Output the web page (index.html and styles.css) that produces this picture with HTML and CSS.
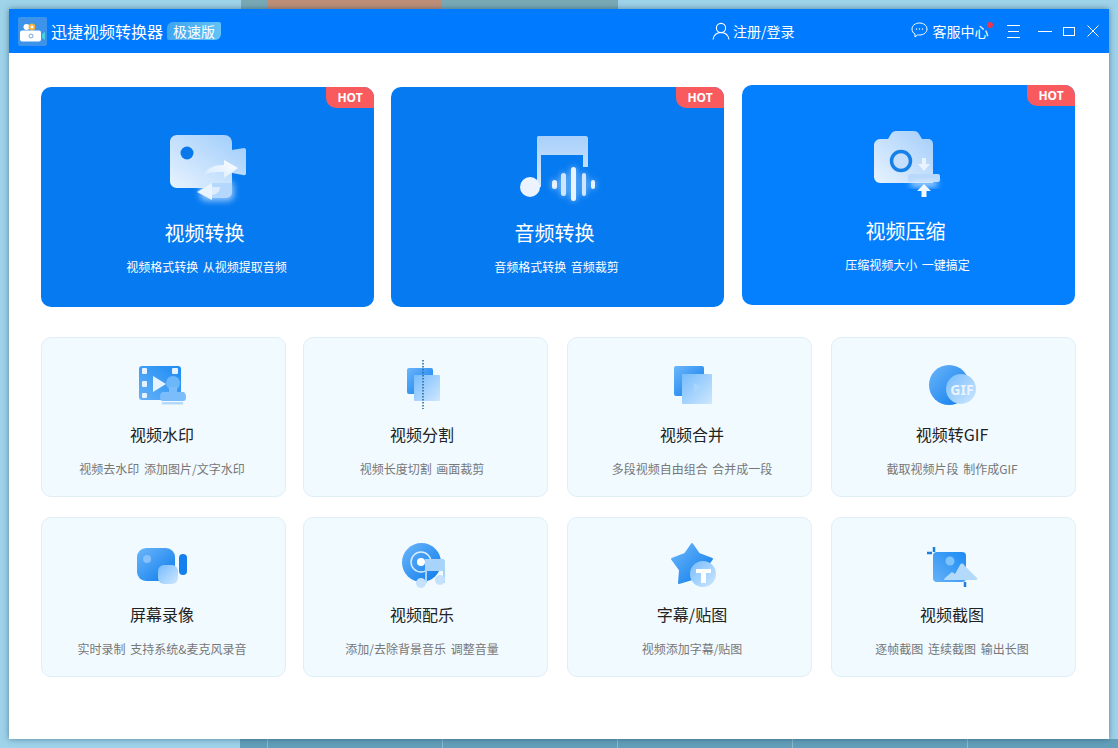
FILE: index.html
```html
<!DOCTYPE html>
<html lang="zh-CN">
<head>
	<meta charset="UTF-8">
	<title>迅捷视频转换器</title>
	<link rel="stylesheet" href="styles.css">
</head>
<body>
	<div class="desktop-top"></div>
	<div class="desktop-bottom"></div>
	<div class="window">
		<header class="titlebar">
			<svg class="logo" width="29" height="29" viewBox="0 0 29 29">
				<rect width="29" height="29" rx="2" fill="#3d92ea"/>
				<circle cx="8.500" cy="10" r="3" fill="#fff"/>
				<circle cx="14" cy="10" r="3.400" fill="#f3b23c"/>
				<circle cx="14" cy="10" r="1.400" fill="#fff"/>
				<rect x="2" y="13.500" width="21" height="11" rx="2" fill="#fff"/>
				<circle cx="13" cy="19" r="2" fill="none" stroke="#7aa8d8" stroke-width="1"/>
				<path d="M24 17l3-2v8l-3-2z" fill="#46d0e6"/>
			</svg>
			<span class="app-name">迅捷视频转换器</span>
			<span class="edition">极速版</span>
			<div class="login">
				<svg width="18" height="18" viewBox="0 0 18 18" fill="none" stroke="#fff" stroke-width="1.100">
					<circle cx="9" cy="6" r="4.600"/>
					<path d="M1 17.500c.8-4.500 3.600-7 8-7s7.200 2.500 8 7"/>
				</svg>
				<span>注册/登录</span>
			</div>
			<div class="service">
				<svg width="17" height="16" viewBox="0 0 17 16" fill="none" stroke="#fff" stroke-width="1">
					<path d="M8.500 1c4.300 0 7.500 2.600 7.500 6s-3.200 6-7.500 6c-.6 0-1.200 0-1.800-.2L4 15v-3C2 11 1 9.200 1 7c0-3.400 3.200-6 7.500-6z"/>
					<circle cx="5.500" cy="7" r=".7" fill="#fff" stroke="none"/>
					<circle cx="8.500" cy="7" r=".7" fill="#fff" stroke="none"/>
					<circle cx="11.500" cy="7" r=".7" fill="#fff" stroke="none"/>
				</svg>
				<span class="service-text">客服中心<i class="dot"></i></span>
			</div>
			<div class="win-btns">
				<svg class="menu" width="13" height="13" viewBox="0 0 13 13" stroke="#fff" stroke-width="1"><path d="M0 .5h13M1 6.500h11M0 12.500h13"/></svg>
				<svg class="min" width="14" height="3" viewBox="0 0 14 3" stroke="#fff" stroke-width="1"><path d="M0 1.500h14"/></svg>
				<svg class="max" width="12" height="9" viewBox="0 0 12 9" fill="none" stroke="#fff" stroke-width="1"><rect x=".5" y=".5" width="11" height="8"/></svg>
				<svg class="close" width="12" height="12" viewBox="0 0 12 12" stroke="#fff" stroke-width="1"><path d="M.5.500l11 11M11.500.500l-11 11"/></svg>
			</div>
		</header>

		<main class="content">
			<section class="top-row">
				<div class="big-card">
					<span class="hot">HOT</span>
					<svg class="big-icon" width="80" height="70" viewBox="0 0 80 70">
						<defs>
							<linearGradient id="bg1" x1="1" y1="0" x2="0" y2="1"><stop offset="0" stop-color="#9ccbfb"/><stop offset="1" stop-color="#e8f3fe"/></linearGradient>
							<linearGradient id="arrow1" x1="0" y1="1" x2="1" y2="0"><stop offset="0" stop-color="#d4e8fe"/><stop offset="1" stop-color="#ffffff"/></linearGradient>
							<filter id="glow" x="-50%" y="-50%" width="200%" height="200%"><feGaussianBlur stdDeviation="3"/></filter>
						</defs>
						<path d="M7 0h47c5 0 8 3 8 8v7l12-2c1.500 0 2 1 2 2v23c0 2-1 2.500-3 2l-11-2v9c0 4-3 6-7 6H7c-4 0-7-3-7-7V7c0-4 3-7 7-7z" fill="url(#bg1)"/>
						<circle cx="17" cy="18" r="6.500" fill="#0a78ea"/>
						<rect x="30" y="46" width="34" height="20" rx="6" fill="#cfe6ff" filter="url(#glow)" opacity=".7"/>
						<path d="M42 48h18c2 0 2 1 2 3v6c0 4-3 6-7 6H42z" fill="#b4d7fd"/>
						<path d="M27 57l15-9v17z" fill="#eaf4ff"/>
						<path d="M42 52h8c0 4-2 7-8 8z" fill="#dcecfe"/>
						<path d="M34 40c3-7 10-10 20-10v-5l14 8-14 10v-6c-8 0-15 0-20 3z" fill="url(#arrow1)"/>
					</svg>
					<h2>视频转换</h2>
					<p>视频格式转换 从视频提取音频</p>
				</div>
				<div class="big-card">
					<span class="hot">HOT</span>
					<svg class="big-icon" width="80" height="70" viewBox="0 0 80 70">
						<defs>
							<linearGradient id="bg2" x1="0" y1="0" x2="0" y2="1"><stop offset="0" stop-color="#a9d0fb"/><stop offset="1" stop-color="#d6e8fd"/></linearGradient>
						</defs>
						<path d="M17 3c0-2 1-2 2-2h47c1 0 2 1 2 2v29h-5V20H21v32h-4z" fill="url(#bg2)"/>
						<circle cx="10" cy="52" r="10" fill="#ebf4fe"/>
						<g fill="#dcedff" filter="url(#glow)" opacity=".7">
							<rect x="32" y="45" width="5" height="9" rx="2.500"/>
							<rect x="41" y="38" width="5" height="23" rx="2.500"/>
							<rect x="51" y="32" width="5" height="34" rx="2.500"/>
							<rect x="62" y="38" width="4" height="23" rx="2"/>
							<rect x="71" y="45" width="4" height="9" rx="2"/>
						</g>
						<rect x="32" y="45" width="5" height="9" rx="2.500" fill="#e5f1fe"/>
						<rect x="41" y="38" width="5" height="23" rx="2.500" fill="#cfe4fd"/>
						<rect x="51" y="32" width="5" height="34" rx="2.500" fill="#e9f3fe"/>
						<rect x="62" y="38" width="4" height="23" rx="2" fill="#cfe4fd"/>
						<rect x="71" y="45" width="4" height="9" rx="2" fill="#e5f1fe"/>
					</svg>
					<h2>音频转换</h2>
					<p>音频格式转换 音频裁剪</p>
				</div>
				<div class="big-card third">
					<span class="hot">HOT</span>
					<svg class="big-icon" width="80" height="70" viewBox="0 0 80 70">
						<defs>
							<linearGradient id="bg3" x1="1" y1="0" x2="0" y2="1"><stop offset="0" stop-color="#a3cdfb"/><stop offset="1" stop-color="#e8f3fe"/></linearGradient>
						</defs>
						<path d="M9 6h8l3-5c1-2 3-3 5-3h18c2 0 4 1 5 3l3 5h6c3 0 5 2 5 5v39H9c-3 0-6-3-6-6V12c0-3 3-6 6-6z" fill="url(#bg3)"/>
						<circle cx="30" cy="28" r="9.500" fill="#c5defc" stroke="#1580e8" stroke-width="3.500"/>
						<path d="M51 25h4v6h4l-6 7-6-7h4z" fill="#eaf4ff"/>
						<rect x="37" y="41" width="32" height="8" rx="2" fill="#b8d8fc"/>
						<rect x="40" y="48" width="26" height="5" fill="#dcedff" filter="url(#glow)"/>
						<path d="M53 51l7 7h-4.500v6h-5v-6H46z" fill="#f2f8ff"/>
					</svg>
					<h2>视频压缩</h2>
					<p>压缩视频大小 一键搞定</p>
				</div>
			</section>

			<section class="tool-grid">
				<div class="tool-card">
					<svg class="tool-icon" width="50" height="50" viewBox="0 0 50 50">
						<defs>
							<linearGradient id="blue" x1="1" y1="0" x2="0" y2="1"><stop offset="0" stop-color="#1b8bf4"/><stop offset="1" stop-color="#66b1f7"/></linearGradient>
							<linearGradient id="blueb" x1="0" y1="0" x2="1" y2="1"><stop offset="0" stop-color="#6cb6fa"/><stop offset="1" stop-color="#0a7bec"/></linearGradient>
							<linearGradient id="pale" x1="0" y1="0" x2="1" y2="1"><stop offset="0" stop-color="#76bcfd"/><stop offset="1" stop-color="#cfe7fe"/></linearGradient>
						</defs>
						<rect x="2" y="8" width="42" height="34" rx="3" fill="url(#blue)"/>
						<g fill="#e6f3fe">
							<rect x="5" y="10" width="5" height="6" rx="1"/>
							<rect x="5" y="23" width="5" height="6" rx="1"/>
							<rect x="5" y="35" width="5" height="5" rx="1"/>
							<rect x="35" y="10" width="6" height="6" rx="1"/>
						</g>
						<path d="M16 18l13 8-13 8z" fill="#e6f3fe"/>
						<circle cx="36" cy="25" r="7" fill="#6cb6fa"/>
						<path d="M32 29h8v5h5c3 0 4 2 4 5 0 3-1 4-3 4H26c-2 0-3-1-3-4s1-5 4-5h5z" fill="#7bbcfb"/>
						<rect x="25" y="44" width="21" height="2.500" fill="#b5d9fb"/>
					</svg>
					<h3>视频水印</h3>
					<p>视频去水印 添加图片/文字水印</p>
				</div>
				<div class="tool-card">
					<svg class="tool-icon" width="50" height="50" viewBox="0 0 50 50">
						<rect x="10" y="10" width="26" height="26" rx="2" fill="url(#blueb)"/>
						<rect x="17" y="17" width="26" height="26" rx="1" fill="url(#pale)"/>
						<path d="M26 2v49" stroke="#2b6f9e" stroke-width="1.600" stroke-dasharray="1.500 1.500"/>
					</svg>
					<h3>视频分割</h3>
					<p>视频长度切割 画面裁剪</p>
				</div>
				<div class="tool-card">
					<svg class="tool-icon" width="50" height="50" viewBox="0 0 50 50">
						<rect x="7" y="8" width="30" height="30" rx="2" fill="url(#blueb)"/>
						<rect x="15" y="16" width="30" height="30" rx="1" fill="url(#pale)"/>
						<path d="M27 25l9 5-9 5z" fill="#a9d6fd"/>
					</svg>
					<h3>视频合并</h3>
					<p>多段视频自由组合 合并成一段</p>
				</div>
				<div class="tool-card">
					<svg class="tool-icon" width="50" height="50" viewBox="0 0 50 50">
						<circle cx="22" cy="27" r="20" fill="url(#blueb)"/>
						<circle cx="34" cy="31" r="15" fill="url(#pale)"/>
						<text class="gif-text" x="35" y="37">GIF</text>
					</svg>
					<h3>视频转GIF</h3>
					<p>截取视频片段 制作成GIF</p>
				</div>
				<div class="tool-card">
					<svg class="tool-icon" width="52" height="50" viewBox="0 0 52 50">
						<rect x="1" y="10" width="38" height="33" rx="9" fill="url(#blueb)"/>
						<circle cx="11" cy="21" r="4" fill="#86c1fb"/>
						<rect x="22" y="27" width="20" height="19" rx="6" fill="url(#pale)"/>
						<rect x="43" y="16" width="8" height="21" rx="4" fill="#1480ee"/>
					</svg>
					<h3>屏幕录像</h3>
					<p>实时录制 支持系统&amp;麦克风录音</p>
				</div>
				<div class="tool-card">
					<svg class="tool-icon" width="50" height="50" viewBox="0 0 50 50">
						<circle cx="24.500" cy="24.500" r="19.500" fill="url(#blueb)"/>
						<circle cx="24" cy="24" r="10" fill="none" stroke="#d8ecfe" stroke-width="1.500"/>
						<circle cx="24" cy="24" r="4" fill="#fff"/>
						<path d="M28 21h18c1 0 2 1 2 2v22h-2V33H30v12h-2z" fill="#a8d4fc"/>
						<circle cx="24" cy="45" r="5" fill="#c6e1fb"/>
						<circle cx="43" cy="42" r="5" fill="#c6e1fb"/>
					</svg>
					<h3>视频配乐</h3>
					<p>添加/去除背景音乐 调整音量</p>
				</div>
				<div class="tool-card">
					<svg class="tool-icon" width="50" height="50" viewBox="0 0 50 50">
						<path d="M25 6l7 10 13 5-8 11v13l-12-4-13 4 1-13-8-11 13-5z" fill="url(#blueb)" stroke="url(#blueb)" stroke-width="2" stroke-linejoin="round"/>
						<circle cx="36" cy="36" r="13" fill="url(#pale)"/>
						<path d="M29 31h15v4h-5v10h-5V35h-5z" fill="#fff"/>
					</svg>
					<h3>字幕/贴图</h3>
					<p>视频添加字幕/贴图</p>
				</div>
				<div class="tool-card">
					<svg class="tool-icon" width="52" height="50" viewBox="0 0 52 50">
						<path d="M1 15h5" stroke="#1a7fdf" stroke-width="2.500" fill="none"/>
						<path d="M8 9v5M39 44v5" stroke="#1a7fdf" stroke-width="2.500"/>
						<rect x="7" y="14" width="33" height="30" rx="4" fill="url(#blue)"/>
						<circle cx="24" cy="23" r="4.500" fill="#7fc3fb"/>
						<path d="M18 42c0-1 1-2 2-3l6-5 3 2 5-9c1-2 3-2 4 0l13 13c1 1 0 2-1 2z" fill="#b3dafb"/>
					</svg>
					<h3>视频截图</h3>
					<p>逐帧截图 连续截图 输出长图</p>
				</div>
			</section>
		</main>
	</div>
</body>
</html>
```

FILE: styles.css
```css
* {
	box-sizing: border-box;
}

html,
body {
	margin: 0;
	padding: 0;
}

body {
	position: relative;
	width: 1118px;
	height: 748px;
	overflow: hidden;
	padding: 9px;
	background: #9fd3ea;
	font-family: "Noto Sans CJK SC", "Noto Sans", sans-serif;
}

/* desktop showing behind the window */
.desktop-top {
	position: absolute;
	left: 241px;
	top: 0;
	width: 377px;
	height: 9px;
	background: linear-gradient(90deg, #7aa9b6 0, #7aa9b6 26px, #c08f78 26px, #c08f78 201px, #7aa9b6 201px);
}

.desktop-bottom {
	position: absolute;
	left: 240px;
	bottom: 0;
	width: 878px;
	height: 9px;
	background-color: #639fba;
	background-image: linear-gradient(90deg, #8fbccd 1px, transparent 1px);
	background-size: 175px 100%;
	background-position: 27px 0;
}

.window {
	position: relative;
	width: 1100px;
	height: 730px;
	background: #fff;
	box-shadow: 0 0 6px rgba(20, 60, 90, .55);
}

.titlebar {
	display: flex;
	align-items: center;
	height: 44px;
	padding-left: 9px;
	background: #007bff;
	color: #fff;
}

.logo {
	flex: none;
}

.app-name {
	margin-left: 4px;
	font-size: 16px;
	white-space: nowrap;
}

.edition {
	margin-left: 4px;
	width: 54px;
	height: 18px;
	line-height: 18px;
	text-align: center;
	font-size: 14px;
	white-space: nowrap;
	border-radius: 6px 2px 6px 2px;
	background: linear-gradient(100deg, #3ca4f0, #64c4f6);
}

.login {
	display: flex;
	align-items: center;
	gap: 3px;
	margin-left: 491px;
	font-size: 14px;
	white-space: nowrap;
}

.service {
	display: flex;
	align-items: center;
	gap: 5px;
	margin-left: 116px;
	font-size: 14px;
	white-space: nowrap;
}

.service svg {
	margin-top: -3px;
}

.service-text {
	position: relative;
}

.dot {
	position: absolute;
	right: -4px;
	top: 1px;
	width: 6px;
	height: 6px;
	border-radius: 50%;
	background: #e8384f;
}

.win-btns {
	display: flex;
	align-items: center;
	margin-left: 18px;
}

.win-btns .min {
	margin-left: 18px;
}

.win-btns .max {
	margin-left: 11px;
}

.win-btns .close {
	margin-left: 12px;
}

.content {
	padding: 32px 33px 0 32px;
}

.top-row {
	display: flex;
	gap: 17px;
}

.big-card {
	position: relative;
	display: flex;
	flex-direction: column;
	align-items: center;
	width: 333px;
	height: 220px;
	padding-top: 48px;
	margin-top: 2px;
	border-radius: 10px;
	background: #067af0;
	color: #fff;
}

.big-card.third {
	margin-top: 0;
	margin-left: 1px;
	background: #0480ff;
}

.hot {
	position: absolute;
	right: 0;
	top: 0;
	width: 48px;
	height: 21px;
	line-height: 21px;
	text-align: center;
	font-size: 12px;
	font-weight: 700;
	font-family: "Noto Sans", sans-serif;
	color: #fff;
	background: #f85a5e;
	border-radius: 0 10px 0 10px;
}

.big-icon {
	display: block;
	flex: none;
	margin-left: 5px;
	overflow: visible;
}

.big-card h2 {
	margin: 13px 6px 0 0;
	font-size: 20px;
	line-height: 30px;
	font-weight: 400;
}

.big-card p {
	margin: 10px 2px 0 0;
	font-size: 12px;
	line-height: 18px;
	word-spacing: 2px;
}

.tool-grid {
	display: grid;
	grid-template-columns: 262px 264px 264px 245px;
	grid-auto-rows: 160px;
	row-gap: 20px;
	margin-top: 30px;
}

.tool-card {
	display: flex;
	flex-direction: column;
	align-items: center;
	width: 245px;
	padding-top: 20px;
	border: 1px solid #e0eef7;
	border-radius: 10px;
	background: #f1faff;
}

/* the labels in the app don't sit quite on each card's centre */
.tool-card:nth-child(4n+1),
.tool-card:nth-child(4n) {
	padding-right: 3px;
}

.tool-card:nth-child(4n+2) {
	padding-right: 7px;
}

.tool-card:nth-child(4n+3) {
	padding-left: 5px;
}

.tool-icon {
	display: block;
	flex: none;
	overflow: visible;
}

.tool-card h3 {
	margin: 14px 0 0;
	font-size: 16px;
	line-height: 24px;
	font-weight: 400;
	color: #222;
}

.tool-card p {
	margin: 14px 0 0;
	font-size: 12px;
	line-height: 18px;
	word-spacing: 2px;
	color: #777;
}

.gif-text {
	font-family: "Noto Sans", sans-serif;
	font-size: 14px;
	font-weight: 700;
	fill: #e9f4ff;
	text-anchor: middle;
}
```
